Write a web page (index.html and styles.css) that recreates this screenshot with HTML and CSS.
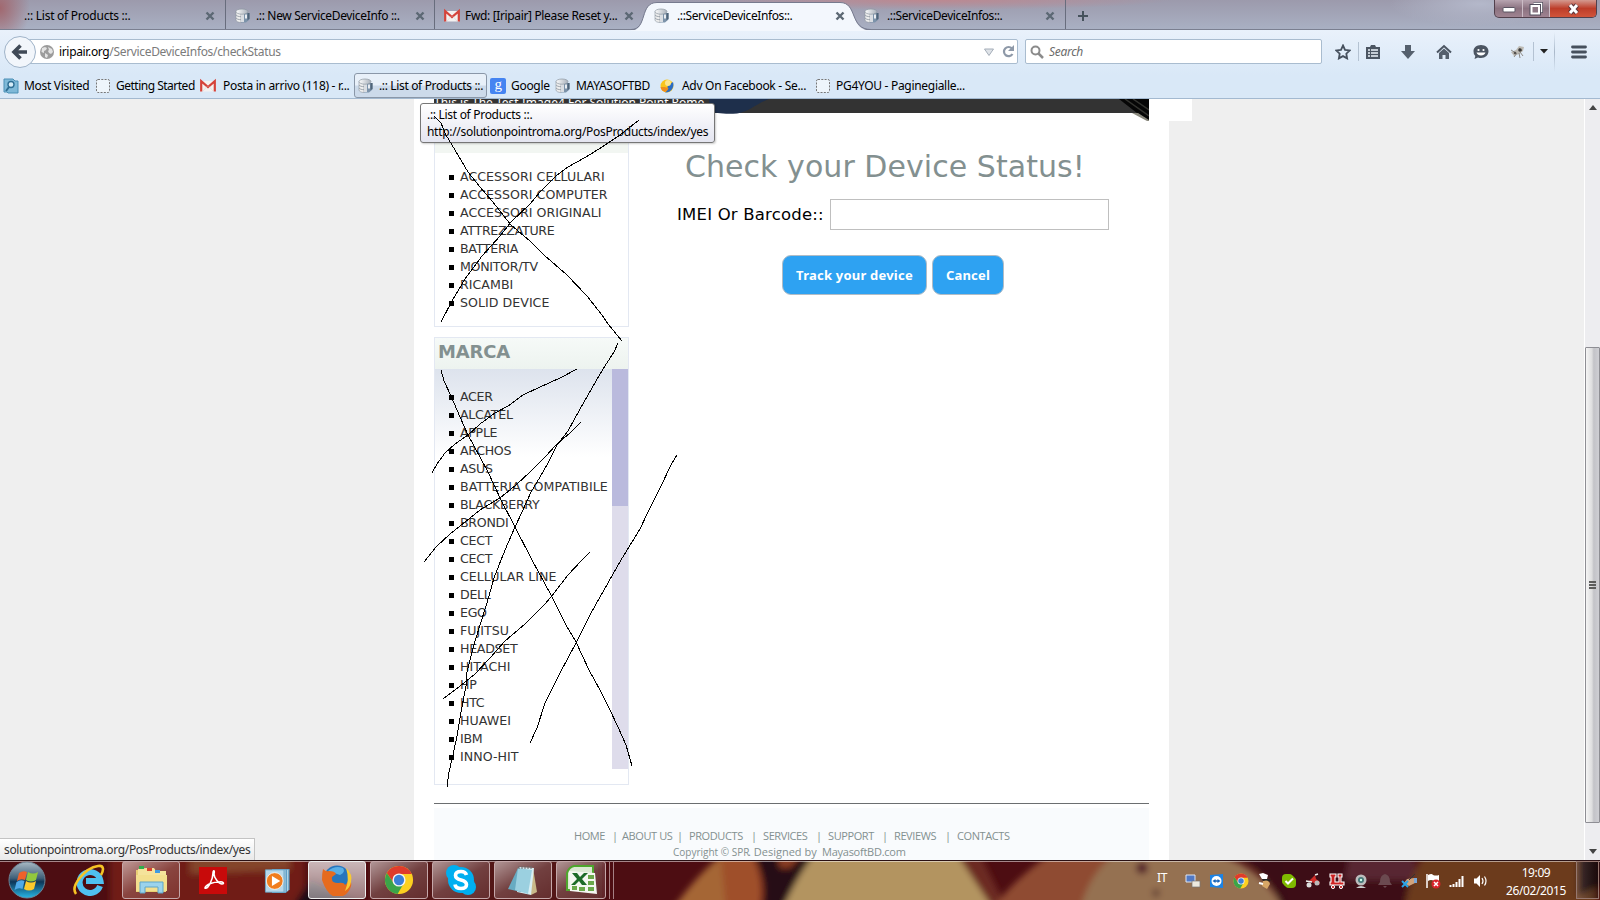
FILE: index.html
```html
<!DOCTYPE html>
<html lang="it">
<head>
<meta charset="utf-8">
<title>.::ServiceDeviceInfos::.</title>
<link rel="stylesheet" href="styles.css">
</head>
<body>
<svg class="defs" width="0" height="0">
  <defs>
    <linearGradient id="gOrb" x1="0" y1="0" x2="0" y2="1"><stop offset="0" stop-color="#a9b9c4"/><stop offset=".45" stop-color="#3f5f78"/><stop offset=".55" stop-color="#0d3557"/><stop offset="1" stop-color="#27b7e6"/></linearGradient>
    <linearGradient id="gDisk" x1="0" y1="0" x2="1" y2="0"><stop offset="0" stop-color="#fdfdfd"/><stop offset="1" stop-color="#a9b1bb"/></linearGradient>
    <symbol id="db" viewBox="0 0 16 16">
      <path d="M1 3.500v8.500c0 1.500 2.500 2.500 5 2.500V5z" fill="#eee" stroke="#8c96a0" stroke-width=".6"/>
      <path d="M6 5h8.500v6.500L11 14.500H6z" fill="#7c93aa"/>
      <path d="M6 6h3v8H6z" fill="#d9dde2"/><path d="M10 6.500h2v4h-2z" fill="#e9edf2"/><path d="M12.500 5h2v5.500l-2 2z" fill="#4f6478"/>
      <ellipse cx="7" cy="3.600" rx="6" ry="2.600" fill="url(#gDisk)" stroke="#8c96a0" stroke-width=".7"/>
      <path d="M1 7c1 1.200 2.500 1.600 5 1.700M1 10c1 1.200 2.500 1.600 5 1.700" fill="none" stroke="#8b949e" stroke-width=".8"/>
    </symbol>
    <symbol id="gmail" viewBox="0 0 16 16">
      <path d="M1 3h14v10.500H1z" fill="#f4f1f0"/><path d="M1.200 13.500V3.200L8 9l6.800-5.800v10.300" fill="none" stroke="#d5433a" stroke-width="2.200"/>
      <path d="M3 13l4-4.500M13 13L9 8.500" stroke="#ddd" stroke-width=".8"/>
    </symbol>
    <symbol id="x" viewBox="0 0 10 10"><path d="M1.500 1.500l7 7m0-7l-7 7" stroke="#5c6874" stroke-width="2.400"/></symbol>
    <symbol id="blank" viewBox="0 0 16 16"><rect x="1.500" y="1.500" width="13" height="13" rx="1.500" fill="#eef5fb" stroke="#777" stroke-dasharray="2 1.300"/></symbol>
    <symbol id="chrome" viewBox="0 0 32 32">
      <circle cx="16" cy="16" r="15" fill="#fcd020"/>
      <path d="M3 8.500A15 15 0 0 1 29.500 9.500H16L10 19z" fill="#df3b2c"/>
      <path d="M3 8.500A15 15 0 0 0 14.500 31l7-12L10 19z" fill="#3ba449"/>
      <circle cx="16" cy="16" r="7" fill="#f4f4f4"/><circle cx="16" cy="16" r="5.500" fill="#3b7fd6"/>
    </symbol>
  </defs>
</svg>

<header class="chrome">
  <div class="tabs">
    <div class="tab t1"><span class="label">.:: List of Products ::.</span><svg class="close"><use href="#x"/></svg></div>
    <div class="tab t2"><svg class="fav"><use href="#db"/></svg><span class="label">.:: New ServiceDeviceInfo ::.</span><svg class="close"><use href="#x"/></svg></div>
    <div class="tab t3"><svg class="fav"><use href="#gmail"/></svg><span class="label">Fwd: [Iripair] Please Reset y...</span><svg class="close"><use href="#x"/></svg></div>
    <div class="tab active">
      <svg class="shape" viewBox="0 0 240 31"><path d="M0 30.500C17 30.500 8 2.500 26 2.500H209C227 2.500 218 30.500 240 30.500V31H0z" fill="#f3f7fd"/><path d="M0 29.500C17 29.500 8 2.500 26 2.500H209C227 2.500 218 29.500 240 29.500" fill="none" stroke="#767a8e"/></svg>
      <svg class="fav"><use href="#db"/></svg><span class="label">.::ServiceDeviceInfos::.</span><svg class="close"><use href="#x"/></svg></div>
    <div class="tab t5"><svg class="fav"><use href="#db"/></svg><span class="label">.::ServiceDeviceInfos::.</span><svg class="close"><use href="#x"/></svg></div>
    <div class="newtab"><svg width="12" height="12"><path d="M6 1v10M1 6h10" stroke="#46525c" stroke-width="2"/></svg></div>
    <div class="winbtns">
      <span><svg width="14" height="8"><rect x="1" y="2.500" width="12" height="4.500" rx="1" fill="#fff" stroke="#5a5562"/></svg></span>
      <span><svg width="14" height="14"><path d="M4.500 1.500h8v8h-2" fill="none" stroke="#514d5c" stroke-width="3"/><path d="M4.500 1.500h8v8h-2" fill="none" stroke="#fff" stroke-width="1.500"/><rect x="2.500" y="4" width="7.500" height="7.500" fill="#8d7885" stroke="#514d5c" stroke-width="4"/><rect x="2.500" y="4" width="7.500" height="7.500" fill="#8d7885" stroke="#fff" stroke-width="2"/></svg></span>
      <span class="red"><svg width="14" height="12"><path d="M3 2l7 8m0-8l-7 8" stroke="#59343a" stroke-width="5"/><path d="M3 2l7 8m0-8l-7 8" stroke="#fff" stroke-width="3"/></svg></span>
    </div>
  </div>

  <div class="nav">
    <div class="back"><svg width="32" height="32"><circle cx="16" cy="16" r="15.500" fill="#f2f6fb" stroke="#9fb3c8"/><path d="M10 16h13M16.500 9.500L10 16l6.500 6.500" fill="none" stroke="#404a57" stroke-width="3.600"/></svg></div>
    <div class="url">
      <svg class="globe" width="14" height="14"><circle cx="7" cy="7" r="7" fill="#9b9b9b"/><path d="M2 3l3-1 2 1-1 2-2 1v2L1.500 7zM8 2l4 2 1 3-2 2-2-1-1-2 1-1zM5 8l3 2-1 3-2-1z" fill="#e3e3e3"/></svg>
      <span class="addr"><b>iripair.org</b>/ServiceDeviceInfos/checkStatus</span>
      <svg class="drop" width="10" height="8"><path d="M.5 1h9L5 7.500z" fill="#dfe3e8" stroke="#a4adb8"/></svg>
      <svg class="reload" width="13" height="13"><path d="M10 3.500A4.600 4.600 0 1 0 10.500 9" fill="none" stroke="#8e99a8" stroke-width="2.200"/><path d="M12 0v6H6z" fill="#8e99a8"/></svg>
    </div>
    <div class="search"><svg width="14" height="14"><circle cx="5.500" cy="5.500" r="4" fill="none" stroke="#8b8b8b" stroke-width="2"/><path d="M8.500 8.500L13 13" stroke="#8b8b8b" stroke-width="2.500"/></svg><i>Search</i></div>
    <div class="tools">
      <svg width="16" height="16"><path d="M8 1.500l2 4.300 4.700.6-3.400 3.300.8 4.700L8 12.100l-4.100 2.300.8-4.700L1.300 6.400 6 5.800z" fill="none" stroke="#46505d" stroke-width="1.800"/></svg>
      <i class="bar"></i>
      <svg width="16" height="16"><path d="M1 3h4l1-2h4l1 2h4v12H1z" fill="#4b5562"/><path d="M3 6h2M3 9h2M3 12h2M6 6h7M6 9h7M6 12h7" stroke="#edf3fa" stroke-width="1.600"/></svg>
      <svg width="16" height="16"><path d="M5 1h6v6h4l-7 8-7-8h4z" fill="#55606d"/></svg>
      <svg width="16" height="16"><path d="M1 8.500L8 2l7 6.500" fill="none" stroke="#4b5562" stroke-width="2"/><path d="M3 9l5-4.500L13 9v6H9.500v-4h-3v4H3z" fill="#55606d"/></svg>
      <svg width="16" height="16"><path d="M8 1c4.500 0 7.500 2.800 7.500 6.300S12.500 14 8 14c-1 0-2-.1-3-.5L1.500 15l.8-3A6 6 0 0 1 .5 7.300C.5 3.800 3.500 1 8 1z" fill="#4b5562"/><circle cx="5.500" cy="6" r="1.100" fill="#fff"/><circle cx="10.500" cy="6" r="1.100" fill="#fff"/><path d="M3.500 8.500h9c-1 4-8 4-9 0z" fill="#fff"/></svg>
      <svg width="16" height="16"><path d="M1 8l5-2 3-4 5 1-1 4-4 3-5 2z" fill="#bdbab3"/><path d="M1 6l5 3m3-5l3 3M4 13l3-4m3 5l-1-5m4 3l-3-4" stroke="#8d8a85" fill="none"/><circle cx="10" cy="6" r="1.800" fill="#3c3a38"/><circle cx="5" cy="9" r="1.300" fill="#55524f"/></svg>
      <i class="bar"></i>
      <svg width="8" height="5"><path d="M0 0h8L4 4.500z" fill="#222"/></svg>
      <i class="bar tall"></i>
      <svg width="16" height="14"><path d="M1.500 2h13M1.500 7h13M1.500 12h13" stroke="#46505d" stroke-width="2.800" stroke-linecap="round"/></svg>
    </div>
  </div>

  <div class="marks">
    <svg viewBox="0 0 16 16"><path d="M1 1h9l2 2h3v12H5l-1-1H1z" fill="#7fb9d8" stroke="#4a8fb5"/><circle cx="8" cy="6.500" r="3" fill="#d7edf8" stroke="#2f6e94" stroke-width="1.400"/><path d="M6 9l-3 4" stroke="#2f6e94" stroke-width="2"/></svg><span>Most Visited</span>
    <svg><use href="#blank"/></svg><span class="tight">Getting Started</span>
    <svg><use href="#gmail"/></svg><span>Posta in arrivo (118) - r...</span>
    <div class="hover"><svg><use href="#db"/></svg><span>.:: List of Products ::.</span></div>
    <div class="google">g</div><span>Google</span>
    <svg><use href="#db"/></svg><span>MAYASOFTBD</span>
    <svg viewBox="0 0 16 16"><circle cx="8" cy="8" r="6.500" fill="#f9c51b"/><path d="M14 4c2 6-3 11-8 10.500 3-2 2-5 3-7z" fill="#2b6cc4"/><path d="M1.500 9c1 6 7 6 8 1l-4-1z" fill="#ef8d1a"/><circle cx="9" cy="5" r="3" fill="#fde58a"/></svg><span>Adv On Facebook - Se...</span>
    <svg><use href="#blank"/></svg><span>PG4YOU - Paginegialle...</span>
  </div>
</header>

<main class="view">
  <div class="page">
    <div class="banner">
      <span>This is The Test Image4 For Solution Point Rome</span>
      <svg class="shoe" width="64" height="16"><path d="M0 0h60C48 4 40 13 28 14.500 16 15.500 6 14 0 12z" fill="#1e2f4b"/></svg>
      <svg class="corner" width="34" height="22"><path d="M4 0h30v22L22 14z" fill="#060606"/><path d="M10 0l24 17M18 0l16 11" stroke="#33332f" stroke-width="1.500"/><path d="M17 14l6 0 11 7v1h-2z" fill="#8a897e"/></svg>
    </div>
    <div class="cols">
      <aside>
        <section class="box cats">
          <h3></h3>
          <ul><li class="w">ACCESSORI CELLULARI</li><li class="w">ACCESSORI COMPUTER</li><li class="w">ACCESSORI ORIGINALI</li><li>ATTREZZATURE</li><li>BATTERIA</li><li>MONITOR/TV</li><li class="w">RICAMBI</li><li class="w">SOLID DEVICE</li></ul>
        </section>
        <section class="box brands">
          <h3>MARCA</h3>
          <div class="scroll">
            <ul><li>ACER</li><li>ALCATEL</li><li>APPLE</li><li>ARCHOS</li><li>ASUS</li><li class="w">BATTERIA COMPATIBILE</li><li>BLACKBERRY</li><li>BRONDI</li><li>CECT</li><li>CECT</li><li class="w">CELLULAR LINE</li><li>DELL</li><li>EGO</li><li class="w">FUJITSU</li><li>HEADSET</li><li class="w">HITACHI</li><li>HP</li><li>HTC</li><li class="w">HUAWEI</li><li>IBM</li><li class="w">INNO-HIT</li></ul>
            <div class="track"><div class="thumb"></div></div>
          </div>
        </section>
      </aside>
      <form class="status">
        <h1>Check your Device Status!</h1>
        <div class="row"><label>IMEI Or Barcode::</label><div class="field"></div></div>
        <div class="btns"><span class="btn">Track your device</span><span class="btn cancel">Cancel</span></div>
      </form>
    </div>
    <footer>
      <nav><span>HOME</span><span>|</span><span>ABOUT US</span><span>|</span><span>PRODUCTS</span><span>|</span><span>SERVICES</span><span>|</span><span>SUPPORT</span><span>|</span><span>REVIEWS</span><span>|</span><span>CONTACTS</span></nav>
      <p><small>Copyright © SPR</small><span class="by">. Designed by</span><span class="maya">MayasoftBD.com</span></p>
    </footer>
  </div>
  <div class="vbar">
    <svg width="8" height="5"><path d="M0 5h8L4 0z" fill="#444"/></svg>
    <div class="vthumb"><i></i><i></i><i></i></div>
    <svg class="dn" width="8" height="5"><path d="M0 0h8L4 5z" fill="#444"/></svg>
  </div>
</main>

<div class="notch"></div>
<div class="tooltip">.:: List of Products ::.<br><span>http://solutionpointroma.org/PosProducts/index/yes</span></div>
<div class="linkstatus">solutionpointroma.org/PosProducts/index/yes</div>

<svg class="ink" width="1600" height="900" fill="none" stroke="#000">
  <polyline points="434,116 437,119 441,123 446,135 455,150 468,172 480,187 492,201 511,225 530,241 544,255 567,275 587,296 602,315 608,324 622,341"/>
  <polyline points="639,120 620,135 602,147 586,157 568,167 556,176 540,192 530,204 511,222 500,236 482,256 465,279 452,301 441,322"/>
  <polyline points="618,343 614,352 603,369 592,388 580,409 568,431 557,445 548,463 540,477 531,492 522,512 515,527 508,543 501,560 494,578 487,603 480,625 473,648 467,672 466,686 461,712 457,736 453,755 449,772 447,787"/>
  <polyline points="441,370 444,381 451,396 460,417 468,435 480,457 488,472 501,500 515,527 532,560 551,595 566,625 576,642 589,670 600,690 610,710 618,727 626,745 632,766"/>
  <polyline points="577,369 560,378 540,387 523,395 508,406 495,413 480,424 468,435 455,444 445,453 437,464 432,473"/>
  <polyline points="581,422 570,433 556,445 545,457 530,472 516,485 500,498 480,510 465,522 450,534 436,547 424,562"/>
  <polyline points="677,455 672,463 660,488 648,512 640,529 621,560 600,597 590,615 576,643 560,673 545,703 537,728 530,743"/>
  <polyline points="590,552 582,560 568,575 551,597 545,604 525,624 505,641 490,658 475,674 460,686 443,699"/>
</svg>

<div class="taskbar">
  <svg class="wall" width="1600" height="40">
    <defs><filter id="soft" x="-10%" y="-50%" width="120%" height="200%"><feGaussianBlur stdDeviation="3"/></filter></defs>
    <rect width="1600" height="40" fill="#4d0d12"/>
    <g filter="url(#soft)">
      <rect x="110" y="-10" width="195" height="60" fill="#6f1b17"/>
      <path d="M190-10h100v20L190 14z" fill="#84442c"/>
      <path d="M310 20l60 30h-80z" fill="#1c0e14"/>
      <path d="M370-10h230v60H370z" fill="#521318"/>
      <path d="M672 50q32-45 60-62 24 12 27 35l2 27z" fill="#a56636"/>
      <path d="M720-10h30q18 30 10 60h-34z" fill="#9f4f2c"/>
      <path d="M752-10h70l-36 60h-24q10-30-12-60z" fill="#271115"/>
      <path d="M776-10h30l-16 18h-10z" fill="#8c3c24"/>
      <path d="M782 50Q800 10 818-10h134q26 22 40 60z" fill="#b39461"/>
      <path d="M954-10h24l30 60h-14z" fill="#6c2a24"/>
      <path d="M992 50q20-30 64-60h68q-24 20-40 60z" fill="#8f4c30"/>
      <path d="M1080 50q10-40 40-60h80q60 10 84 60z" fill="#957151"/>
      <circle cx="1142" cy="8" r="6" fill="#54202a"/><circle cx="1156" cy="33" r="4" fill="#6a4638"/>
      <path d="M1226-10h60l10 60h-14q-10-42-56-60z" fill="#3b0e14"/>
      <path d="M1280-10h130v60h-120z" fill="#3d0e17"/>
      <path d="M1350-10h65v30h-70z" fill="#592532"/>
      <path d="M1404 50q6-40 24-60h170v60z" fill="#6c3a1f"/>
      <path d="M1578-10h22v36l-22 10z" fill="#20100e"/>
    </g>
    <rect width="1600" height="1" fill="#2a1114"/><rect y="1" width="1600" height="1" fill="#fff" opacity=".5"/>
  </svg>
  <div class="apps">
    <div class="app orb"><svg width="38" height="38" viewBox="0 0 38 38"><circle cx="19" cy="19" r="18" fill="url(#gOrb)" stroke="#6d8394"/><path d="M11 12q4-3 8-1l-2 8q-4-2-8 1z" fill="#f0612a"/><path d="M20 11q5 3 10 0l-2 8q-5 3-10 0z" fill="#93c83d"/><path d="M8.500 21q4-3 8-1l-2 8q-4-2-8 1z" fill="#4fa9e8"/><path d="M18 20q5 3 10 0l-2 8q-5 3-10 0z" fill="#fcc92c"/></svg></div>
    <div class="app ie"><svg width="32" height="32" viewBox="0 0 32 32"><path d="M27 22A10.500 10.500 0 1 1 27.500 17H13" fill="none" stroke="#4fc0f0" stroke-width="6"/><path d="M3 30C-3 22 12 4 25 2c6-1 6 4 3 9" fill="none" stroke="#f6c324" stroke-width="2.600"/></svg></div>
    <div class="app on"><svg width="34" height="32" viewBox="0 0 34 32"><path d="M2 6h8l2 2h20v20H2z" fill="#e9cf74"/><path d="M12 4h8l2 3h10v20H4V5z" fill="#f5e39b"/><path d="M2 11h31v16H2z" fill="#f3df8e"/><path d="M5 2h5v3H5z" fill="#2fae4c"/><path d="M13 4h5v3h-5z" fill="#d6432e"/><path d="M21 6h5v3h-5z" fill="#3f9ae0"/><path d="M6 29V18h23v11h-5v-6H11v6z" fill="#9bd3ec" stroke="#5fa6c9"/></svg></div>
    <div class="app"><svg width="28" height="27" viewBox="0 0 28 27"><rect width="28" height="27" fill="#c80a0a"/><path d="M6 21c3 2 8-9 8-15 0-3 2-3 1 1 0 4 5 10 8 10s1-3-3-2c-5 0-13 2-14 6z" fill="none" stroke="#fff" stroke-width="1.600"/></svg></div>
    <div class="app media"><svg width="27" height="26" viewBox="0 0 28 28"><path d="M8 1h19v22l-4 4H8z" fill="#5f9fc4"/><path d="M22 2v24M25 2v23" stroke="#cfe4f0"/><path d="M1 2h20v24H1z" fill="#b7d8ea" stroke="#6aa6c8"/><circle cx="11" cy="14" r="9" fill="#f07d1e" stroke="#fff" stroke-width=".8"/><path d="M8 8.500l9 5.500-9 5.500z" fill="#fff"/></svg></div>
    <div class="app on bright"><svg width="32" height="32" viewBox="0 0 32 32"><circle cx="16" cy="15" r="13.500" fill="#2776bd"/><path d="M7 7q7-6 15-3 3 4-3 7z" fill="#59aee4"/><path d="M2 5q3 3 6 2 6 0 7 3l-4 3q-1 6 6 6 6-1 7 2 3-2 4-7 4 5 1 11-4 8-13 8T1 16q0-7 1-11z" fill="#e66b1e"/><path d="M25 4q7 6 5 14-1 6-6 9 5-11 1-23z" fill="#f8ca32"/></svg></div>
    <div class="app on"><svg width="30" height="30"><use href="#chrome"/></svg></div>
    <div class="app on"><svg width="32" height="32" viewBox="0 0 32 32"><circle cx="9" cy="9" r="8" fill="#00aff0"/><circle cx="23" cy="23" r="8" fill="#00aff0"/><circle cx="16" cy="16" r="13" fill="#00aff0"/><path d="M21.500 11q-1-3.500-5.500-3.500-5.500 0-5.500 4 0 3 5.500 4.500t5.500 4.500Q21.500 24.500 16 24.500t-6-4" fill="none" stroke="#fff" stroke-width="3.600"/></svg></div>
    <div class="app on"><svg width="32" height="32" viewBox="0 0 32 32"><path d="M26 4l4 24-6 3V6z" fill="#c9b98a"/><path d="M12 3l15 1-3 27-14-3z" fill="#d8eef4"/><path d="M11 4L1 25l13 3 7-21z" fill="#67abc2"/><path d="M11 4l14 2-4 24-13-4z" fill="#9bd0e0"/><path d="M12 2v3m3-3v3m3-3v3m3-3v3m3-3v3" stroke="#666"/></svg></div>
    <div class="app on"><svg width="34" height="32" viewBox="0 0 34 32"><path d="M10 2h19v24H3V9q2-6 7-7z" fill="#dbe9d2" stroke="#4fa62d" stroke-width="2"/><path d="M5 7l26 2 2 21-27-3z" fill="#f4f7f1"/><path d="M8 9h5l3 4 4-4h4l-6 6 5 6h-5l-3-4-4 4H7l6-6z" fill="#1d6b28"/><path d="M24 11h6v4h-6zM24 17h6v4h-6zM8 22h5v4H8zM15 23h6v4h-6zM24 23h6v4h-6z" fill="#6aa84a"/></svg></div>
    <i class="edge"></i>
  </div>
  <div class="tray">
    <span class="lang">IT</span>
    <svg viewBox="0 0 16 16"><path d="M1 2h9v7H1z" fill="#5179c4" stroke="#dfe6f2"/><path d="M7 8h8v6H7z" fill="#ece9df" stroke="#777" stroke-width=".7"/></svg>
    <svg viewBox="0 0 16 16"><path d="M1 2l13-1v14L1 14z" fill="#1b83e6"/><circle cx="7.500" cy="8" r="5" fill="#fff"/><path d="M3.500 8l3-2v1.300h2V6l3 2-3 2V8.700h-2V10z" fill="#1763b8"/></svg>
    <svg viewBox="0 0 16 16"><use href="#chrome"/></svg>
    <svg viewBox="0 0 16 16"><path d="M2 1l4-1 5 2-1 4H5z" fill="#fff"/><path d="M5 6h5l4 1-3 2-5-1z" fill="#222"/><path d="M6 8q6-2 7 3l-3 5-5-3z" fill="#d7a666"/><path d="M2 10l4 1" stroke="#fff" stroke-width="2"/></svg>
    <svg viewBox="0 0 16 16"><rect x="1" y="1" width="11" height="11" rx="4" fill="#7fba00"/><rect x="4" y="4" width="11" height="11" rx="4" fill="#7fba00"/><circle cx="8" cy="8" r="6.500" fill="#7fba00"/><path d="M4.500 8l2.500 2.500 5-5" fill="none" stroke="#fff" stroke-width="2"/></svg>
    <svg viewBox="0 0 16 16"><path d="M4 8l6-6 1 4 4 3-1 3-5-2z" fill="#d22f2b"/><circle cx="4" cy="12" r="2.500" fill="#ddd"/><circle cx="12" cy="10" r="2.500" fill="#bbb"/><path d="M10 2l3-1M1 8l6 1" stroke="#eee" stroke-width="1.500"/></svg>
    <svg viewBox="0 0 16 16"><path d="M1 1h6v3H6v5h4V4H9V1h4v3h-1v5h3v3H1V9h1V4H1z" fill="#c22" stroke="#fff" stroke-width="1.100"/><circle cx="4" cy="14" r="1.600" fill="#c22" stroke="#fff"/><circle cx="12" cy="14" r="1.600" fill="#c22" stroke="#fff"/></svg>
    <svg viewBox="0 0 16 16"><circle cx="8" cy="7" r="5.500" fill="#bdbdbd"/><circle cx="8" cy="7" r="3" fill="#477"/><circle cx="8" cy="7" r="1.200" fill="#cfe"/><path d="M3 15q5-4 10 0z" fill="#ccc"/></svg>
    <svg viewBox="0 0 16 16"><path d="M8 1q5 1 5 8l2 3H1l2-3q0-7 5-8z" fill="#6b4a50"/><path d="M6 13h4l-2 2z" fill="#6b4a50"/></svg>
    <svg viewBox="0 0 16 16"><path d="M3 10l3-4 7-1 1 5-6 3z" fill="#d0a37c"/><path d="M13 5h3v5h-3z" fill="#7aa7d8"/><path d="M1 8l6 6m0-6l-6 6" stroke="#29a3e8" stroke-width="2"/><path d="M8 7l6-6" stroke="#333"/></svg>
    <svg viewBox="0 0 16 16"><path d="M2 1v14" stroke="#fff" stroke-width="1.500"/><path d="M3 2q4-2 5 0 3 1 6 0v6q-3 1-5 0-3-2-6 0z" fill="#fff"/><circle cx="11" cy="11" r="4.500" fill="#d8232a"/><path d="M9 9l4 4m0-4l-4 4" stroke="#fff" stroke-width="1.500"/></svg>
    <svg viewBox="0 0 16 16"><path d="M1.500 14v-2M4.500 14v-3M7.500 14V9M10.500 14V6M13.500 14V3" stroke="#fff" stroke-width="2"/></svg>
    <svg viewBox="0 0 16 16"><path d="M1 5.500h2.500L7 2v12l-3.500-3.500H1z" fill="#fff"/><path d="M9 5q2 3 0 6M11.500 3.500q3 4.500 0 9" fill="none" stroke="#fff" stroke-width="1.200"/></svg>
    <div class="clock">19:09<br>26/02/2015</div>
    <div class="desk"></div>
  </div>
</div>
</body>
</html>
```
FILE: styles.css
```css
* { box-sizing: border-box; }
body { margin: 0; width: 1600px; height: 900px; overflow: hidden; position: relative; display: flex; flex-direction: column; font: 12px/16px "Noto Sans", sans-serif; letter-spacing: -.3px; color: #000; background: #efefef; }
svg { display: block; flex: none; }
.defs { position: absolute; }

/* browser toolbar */
.chrome { height: 99px; border-bottom: 1px solid #a3b9d0; background: linear-gradient(#e9f1fb 30px, #d9e8f7 75px); }
.tabs { height: 30px; display: grid; grid-template-columns: 226px 209px 199px 246px 186px 38px 390px 106px; border-bottom: 1px solid #7a7f90; background: radial-gradient(ellipse 30px 40px at 0 8px, #a1686f, transparent), radial-gradient(ellipse 240px 10px at 930px 0, #bd8890, transparent), radial-gradient(ellipse 90px 22px at 1480px 4px, #b4b8ca, transparent), linear-gradient(#9c9aac, #a9b0c3); }
.tab { display: flex; align-items: center; height: 29px; padding: 3px 9px 0 9px; border-right: 1px solid #686d7d; white-space: nowrap; position: relative; letter-spacing: -.35px; }
.tab .fav { width: 16px; height: 16px; margin-right: 5px; }
.tab .label { flex: 1; }
.tab .close { width: 10px; height: 10px; }
.t1 { padding-left: 24px; padding-right: 10px; letter-spacing: -.25px; }
.t3 { border: 0; padding-right: 0; }
.active { border: 0; padding: 3px 35px 0 20px; letter-spacing: -.4px; }
.active .fav, .t5 .fav { margin-right: 7px; }
.active .label, .active .fav, .active .close { position: relative; }
.active .shape { position: absolute; left: -3px; top: 0; width: 240px; height: 31px; z-index: 0; }
.t5 { padding-left: 0; margin-left: -16px; padding-right: 10px; letter-spacing: -.4px; }
.newtab { padding: 10px 0 0 11px; }
.winbtns { grid-column: 8; display: grid; grid-template-columns: 28px 27px 48px; height: 18px; width: 103px; border: 1px solid #51404c; border-top: 0; border-radius: 0 0 5px 5px; overflow: hidden; background: linear-gradient(#b7a4b0, #8b7280 50%, #a08391); }
.winbtns span { display: flex; align-items: center; justify-content: center; border-right: 1px solid #cbbcc6; }
.winbtns .red { background: linear-gradient(#d49a90, #bd3d29 50%, #d1543a); border: 0; }

.nav { height: 43px; display: flex; align-items: center; padding-left: 4px; }
.back { width: 32px; height: 32px; z-index: 1; }
.url { width: 990px; margin-left: -8px; height: 25px; border: 1px solid #a9bccf; background: #fff; border-radius: 2px; display: grid; grid-template-columns: 19px 925px 18px 13px; align-items: center; padding-left: 11px; color: #7b7b7b; }
.addr { letter-spacing: -.34px; }
.addr b { font-weight: 400; color: #000; }
.search { margin-left: 7px; width: 297px; height: 25px; border: 1px solid #a9bccf; background: #fff; border-radius: 2px; display: flex; align-items: center; gap: 5px; padding-left: 4px; color: #6b6b6b; }
.tools { display: grid; grid-template-columns: 23px 7px 35px 36px 37px 37px 23px 6px 14px 14px 16px; align-items: center; margin-left: 13px; }
.tools > :nth-child(n+9) { margin-left: 1px; }
.tools > :last-child { margin-left: 4px; }
.bar { width: 1px; height: 19px; background: #b4c2d2; }
.bar.tall { height: 40px; background: linear-gradient(transparent, #a9b8c9, transparent); }

.marks { height: 25px; display: grid; grid-template-columns: 20px 72px 20px 85px 22px 131px 136px 21px 45px 20px 84px 22px 134px 20px auto; align-items: center; padding-left: 4px; white-space: nowrap; }
.marks svg { width: 16px; height: 16px; margin-left: -1px; }
.tight { letter-spacing: -.5px; }
.hover { width: 133px; height: 25px; border: 1px solid #8a97a8; border-radius: 3px; background: linear-gradient(#e8f0f9 48%, #ccdaea 52%); display: flex; align-items: center; gap: 5px; padding-left: 4px; letter-spacing: -.35px; }
.google { width: 16px; height: 16px; background: #4584f1; border-radius: 2px; color: #fff; font: 15px/13px "Liberation Serif", serif; text-align: center; }

/* page */
.view { height: 761px; display: flex; padding-left: 414px; overflow: hidden; }
.page { width: 755px; background: #fff; padding: 0 20px; }
.banner { height: 14px; background: #333; position: relative; color: #fff; }
.banner span { position: relative; top: -4px; display: block; white-space: nowrap; font: 12px/16px "Noto Sans", sans-serif; letter-spacing: 0; }
.shoe { position: absolute; left: 275px; top: 0; }
.corner { position: absolute; right: 0; top: 0; }
.notch { position: absolute; left: 1169px; top: 99px; width: 23px; height: 22px; background: #fff; }
.cols { display: flex; height: 690px; }
aside { width: 195px; font: 12.600px/18px "DejaVu Sans", sans-serif; letter-spacing: -.3px; color: #333; }
.box { border: 1px solid #e3e8f2; }
.box h3 { margin: 0; height: 31px; background: linear-gradient(#f6faf8, #edf3ef); font: bold 18px/27px "DejaVu Sans", sans-serif; letter-spacing: -.15px; color: #839090; padding-left: 3px; }
.box ul { margin: 0; padding: 0; list-style: none; white-space: nowrap; }
.box li { height: 18px; display: flex; align-items: center; padding-left: 14px; }
.box li.w { letter-spacing: .03px; }
.box li::before { content: ""; width: 5px; height: 5px; background: #000; margin-right: 6px; }
.cats { height: 214px; }
.cats h3 { height: 39px; background: #f2f6f2; }
.cats ul { padding-top: 15px; }
.brands { margin-top: 10px; height: 448px; }
.scroll { display: flex; height: 400px; background: linear-gradient(#dde3ed, #fff 88px); }
.scroll ul { width: 177px; padding-top: 19px; }
.track { width: 16px; background: #dedceb; }
.thumb { height: 137px; background: #babadd; }
.status { margin-left: 48px; font-family: "DejaVu Sans", sans-serif; letter-spacing: 0; }
.status h1 { margin: 34px 0 0 8px; font: 30px/40px "DejaVu Sans", sans-serif; letter-spacing: .05px; color: #839090; white-space: nowrap; }
.row { display: flex; align-items: center; margin-top: 12px; }
.row label { width: 153px; font-size: 16.500px; letter-spacing: .2px; white-space: nowrap; }
.field { width: 279px; height: 31px; border: 1px solid #bfbfbf; }
.btns { display: flex; gap: 5px; margin: 25px 0 0 105px; }
.btn { width: 145px; height: 40px; border: 1px solid #b0bcc6; border-radius: 9px; background: #2ea2f2; color: #fff; font: bold 13px/38px "Noto Sans", sans-serif; letter-spacing: .22px; text-align: center; }
.btn.cancel { width: 72px; }
footer { border-top: 1px solid #6b6e70; height: 60px; background: linear-gradient(#fff 4px, #f9fbfd 4px); font: 11px/16px "Open Sans", sans-serif; letter-spacing: -.4px; color: #839090; padding: 24px 0 0 140px; }
footer nav { display: grid; grid-template-columns: 38px 10px 55px 12px 62px 12px 53px 12px 54px 12px 51px 12px 60px; white-space: nowrap; }
footer p { margin: 0; padding-left: 99px; display: grid; grid-template-columns: 75px 74px auto; white-space: nowrap; align-items: baseline; }
footer small { font-size: 10px; letter-spacing: 0; }
.by { letter-spacing: 0; }
.maya { letter-spacing: -.25px; }

.vbar { margin-left: auto; width: 16px; border-left: 1px solid #fff; background: #ededf0; display: flex; flex-direction: column; align-items: center; padding-top: 6px; }
.vthumb { margin-top: 237px; width: 15px; height: 476px; border: 1px solid #8e8e94; border-radius: 1px; background: linear-gradient(90deg, #f5f5f5, #dededf 45%, #c3c3c8 60%, #cfcfd4); display: flex; flex-direction: column; justify-content: center; align-items: center; gap: 1px; }
.vthumb i { width: 7px; height: 2px; background: #5c5c5c; }
.dn { margin-top: 26px; }

/* overlays */
.tooltip { position: absolute; left: 420px; top: 103px; width: 295px; height: 40px; border: 1px solid #767676; border-radius: 3px; background: linear-gradient(#fff, #e4e5f0); padding: 2px 6px; line-height: 17px; white-space: nowrap; box-shadow: 1px 1px 2px rgba(0,0,0,.2); }
.linkstatus { position: absolute; left: 0; top: 838px; width: 255px; height: 22px; border: 1px solid #c3c3c3; border-width: 1px 1px 0 0; background: linear-gradient(#fff, #e9e9e9); color: #333; line-height: 22px; letter-spacing: -.33px; padding-left: 4px; white-space: nowrap; }
.ink { position: absolute; left: 0; top: 0; shape-rendering: crispEdges; pointer-events: none; }

/* taskbar */
.taskbar { height: 40px; position: relative; display: flex; justify-content: space-between; background: #4d0d12; }
.wall { position: absolute; left: 0; top: 0; }
.apps { position: relative; display: grid; grid-template-columns: 58px repeat(8, 58px) 50px 4px; column-gap: 4px; padding-top: 1px; margin-left: -2px; }
.app { height: 38px; display: flex; align-items: center; justify-content: center; }
.media { padding-left: 4px; padding-top: 2px; }
.on { border: 1px solid #c5a7a9; border-radius: 3px; background: linear-gradient(150deg, rgba(255,255,255,.55), rgba(255,255,255,.18) 50%, rgba(255,255,255,.1)); }
.bright { border-color: #eee; background: linear-gradient(rgba(255,255,255,.7), rgba(255,255,255,.45)); }
.edge { border: 1px solid #a58084; border-width: 0 1px; height: 38px; margin-left: -1px; }
.tray { position: relative; display: grid; grid-template-columns: 27px repeat(12, 24px) 34px 64px 6px 23px; color: #fff; align-items: center; padding-right: 1px; }
.tray svg { width: 16px; height: 16px; margin: 2px 0 0 1px; }
.lang { padding-bottom: 5px; }
.clock { text-align: center; line-height: 18px; padding-top: 3px; margin: 0 -2px 0 -6px; letter-spacing: -.4px; }
.desk { grid-column: 17; height: 38px; border: 1px solid #96776f; background: linear-gradient(90deg, rgba(255,255,255,.15), rgba(0,0,0,.3)); }
```
